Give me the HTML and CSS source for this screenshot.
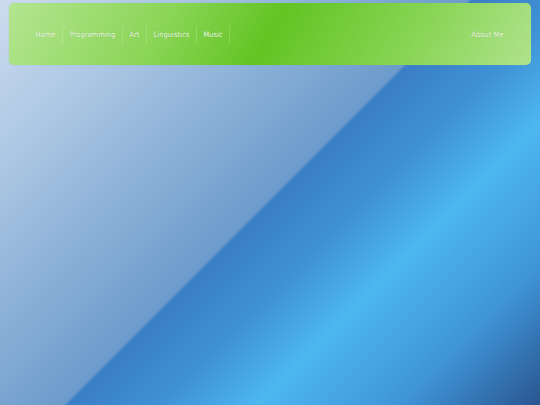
FILE: index.html
```html
<!DOCTYPE html>
<html>
<head>
<meta charset="utf-8">
<link rel="stylesheet" href="styles.css">
</head>
<body>
<header class="navbar">
  <ul class="nav-left">
    <li><a href="#">Home</a></li>
    <li><a href="#">Programming</a></li>
    <li><a href="#">Art</a></li>
    <li><a href="#">Linguistics</a></li>
    <li><a href="#">Music</a></li>
  </ul>
  <ul class="nav-right">
    <li><a href="#">About Me</a></li>
  </ul>
</header>
</body>
</html>
```
FILE: styles.css
```css
html, body {
  margin: 0;
  padding: 0;
  height: 100%;
}
body {
  min-height: 405px;
  background: linear-gradient(135deg, #cddcef 0%, #a8c4e2 20%, #6c9bcb 49.5%, #3a7ec6 50%, #3f92d6 60%, #4db7f0 70%, #3f95d8 85%, #2a5590 100%);
  font-family: "DejaVu Sans Condensed", "DejaVu Sans", Verdana, sans-serif;
  padding: 3px 9px 0 9px;
  box-sizing: border-box;
}
.navbar {
  display: flex;
  justify-content: space-between;
  align-items: center;
  height: 62px;
  box-sizing: border-box;
  padding: 2px 21px 0 20px;
  border-radius: 5px;
  background: linear-gradient(120deg, #b4e591 0%, #8ad556 30%, #62c423 50%, #86d452 75%, #afe28c 100%);
  box-shadow: 0 0 1px rgba(120, 190, 90, 0.6);
}
.nav-left, .nav-right {
  list-style: none;
  margin: 0;
  padding: 0;
  display: flex;
  align-items: center;
}
.nav-left li {
  border-right: 1px solid rgba(255, 255, 255, 0.18);
}
.navbar a {
  display: block;
  padding: 0 6.6px;
  line-height: 18px;
  font-size: 7.5px;
  color: #f0f9e8;
  text-decoration: none;
  text-shadow: 0 0 1px rgba(80, 140, 40, 0.5);
}
```
